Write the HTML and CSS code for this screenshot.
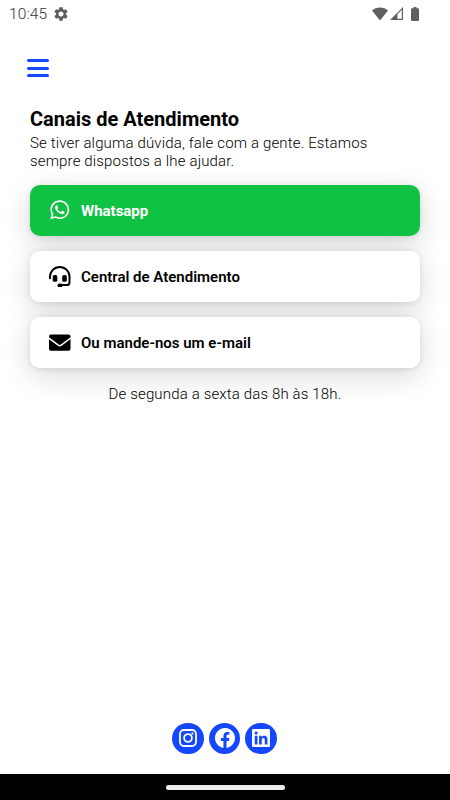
FILE: index.html
```html
<!DOCTYPE html>
<html lang="pt-BR">
<head>
  <meta charset="UTF-8">
  <meta name="viewport" content="width=device-width, initial-scale=1.0">
  <title>Canais de Atendimento</title>
  <link rel="stylesheet" href="styles.css">
</head>
<body>
  <div class="screen">
    <div class="status-bar">
      <span class="clock">10:45</span>
      <svg class="gear" viewBox="2 2 20 20"><path d="M19.14 12.94c.04-.3.06-.61.06-.94 0-.32-.02-.64-.07-.94l2.03-1.58c.18-.14.23-.41.12-.61l-1.92-3.32c-.12-.22-.37-.29-.59-.22l-2.39.96c-.5-.38-1.03-.7-1.62-.94l-.36-2.54c-.04-.24-.24-.41-.48-.41h-3.84c-.24 0-.43.17-.47.41l-.36 2.54c-.59.24-1.13.57-1.62.94l-2.39-.96c-.22-.08-.47 0-.59.22L2.74 8.87c-.12.21-.08.47.12.61l2.03 1.58c-.05.3-.09.63-.09.94s.02.64.07.94l-2.03 1.58c-.18.14-.23.41-.12.61l1.92 3.32c.12.22.37.29.59.22l2.39-.96c.5.38 1.03.7 1.62.94l.36 2.54c.05.24.24.41.48.41h3.84c.24 0 .44-.17.47-.41l.36-2.54c.59-.24 1.13-.56 1.62-.94l2.39.96c.22.08.47 0 .59-.22l1.92-3.32c.12-.22.07-.47-.12-.61l-2.01-1.58zM12 15.6c-1.98 0-3.6-1.62-3.6-3.6s1.62-3.6 3.6-3.6 3.6 1.62 3.6 3.6-1.62 3.6-3.6 3.6z"/></svg>
      <div class="signals">
        <svg class="wifi" viewBox="0 0 16 14"><path d="M8 13.6 0 3.5C2.2 1.6 5 .5 8 .5s5.800 1.100 8 3z"/></svg>
        <svg class="cell" viewBox="0 0 14 14"><path fill-rule="evenodd" d="M0 14 14 0v14zM8 7.700v5h4.700V3z"/></svg>
        <svg class="battery" viewBox="0 0 8 14"><path d="M2.500 0h3v1.200H7a1 1 0 0 1 1 1V13a1 1 0 0 1-1 1H1a1 1 0 0 1-1-1V2.200a1 1 0 0 1 1-1h1.500z"/></svg>
      </div>
    </div>

    <button class="menu" aria-label="Menu">
      <span></span>
      <span></span>
      <span></span>
    </button>

    <main class="content">
      <h1>Canais de Atendimento</h1>
      <p class="intro">Se tiver alguma dúvida, fale com a gente. Estamos sempre dispostos a lhe ajudar.</p>

      <div class="channels">
        <a class="channel whatsapp">
          <svg viewBox="0 0 448 512"><path d="M380.900 97.100C339 55.100 283.200 32 223.900 32c-122.400 0-222 99.600-222 222 0 39.100 10.200 77.300 29.600 111L0 480l117.700-30.900c32.400 17.700 68.900 27 106.100 27h.1c122.300 0 224.100-99.600 224.100-222 0-59.300-25.200-115-67.100-157zm-157 341.600c-33.200 0-65.700-8.900-94-25.700l-6.700-4-69.800 18.300L72 359.200l-4.400-7c-18.500-29.400-28.200-63.300-28.200-98.200 0-101.700 82.800-184.500 184.600-184.500 49.300 0 95.600 19.200 130.400 54.100 34.800 34.900 56.200 81.200 56.100 130.500 0 101.800-84.900 184.600-186.600 184.600zm101.200-138.200c-5.500-2.800-32.800-16.200-37.900-18-5.100-1.900-8.800-2.800-12.500 2.800-3.700 5.600-14.300 18-17.600 21.800-3.200 3.700-6.500 4.200-12 1.400-32.600-16.300-54-29.100-75.500-66-5.700-9.800 5.700-9.100 16.300-30.300 1.800-3.700.9-6.900-.5-9.700-1.400-2.800-12.500-30.100-17.100-41.200-4.500-10.800-9.100-9.300-12.500-9.500-3.200-.2-6.900-.2-10.600-.2-3.700 0-9.700 1.400-14.800 6.900-5.100 5.600-19.400 19-19.400 46.300 0 27.300 19.900 53.700 22.600 57.400 2.800 3.700 39.100 59.700 94.800 83.800 35.200 15.200 49 16.500 66.600 13.900 10.700-1.600 32.800-13.400 37.400-26.400 4.600-13 4.600-24.100 3.200-26.400-1.300-2.500-5-3.900-10.500-6.600z"/></svg>
          <span>Whatsapp</span>
        </a>
        <a class="channel">
          <svg viewBox="0 0 22 22"><path class="band" d="M1 12.500V11a10 10 0 0 1 20 0v5.500a3 3 0 0 1-3 3h-6"/><rect x="3.800" y="9.200" width="4.700" height="7" rx="1.700"/><rect x="13.500" y="9.200" width="4.700" height="7" rx="1.700"/><rect x="8.700" y="17.800" width="5.300" height="4" rx="2"/></svg>
          <span>Central de Atendimento</span>
        </a>
        <a class="channel">
          <svg viewBox="0 0 22 22"><rect y="2.500" width="22" height="16.600" rx="2"/><path class="flap" d="M-.5 6 9.500 13.400a2.500 2.500 0 0 0 3 0L22.500 6"/></svg>
          <span>Ou mande-nos um e-mail</span>
        </a>
      </div>

      <p class="hours">De segunda a sexta das 8h às 18h.</p>
    </main>

    <footer class="social">
      <a class="social-link" aria-label="Instagram">
        <svg viewBox="0 0 18 18"><rect class="line" x="1" y="1" width="16" height="16" rx="4"/><circle class="line" cx="9" cy="9" r="3.900"/><circle cx="13.400" cy="4.600" r="1.100"/></svg>
      </a>
      <a class="social-link" aria-label="Facebook">
        <svg class="facebook" viewBox="0 0 24 24"><path d="M24 12.073c0-6.627-5.373-12-12-12s-12 5.373-12 12c0 5.990 4.388 10.954 10.125 11.854v-8.385H7.078v-3.470h3.047V9.430c0-3.007 1.792-4.669 4.533-4.669 1.312 0 2.686.235 2.686.235v2.953H15.830c-1.491 0-1.956.925-1.956 1.874v2.250h3.328l-.532 3.470h-2.796v8.385C19.612 23.027 24 18.062 24 12.073z"/></svg>
      </a>
      <a class="social-link" aria-label="LinkedIn">
        <svg viewBox="0 32 448 448"><path d="M416 32H31.900C14.300 32 0 46.500 0 64.300v383.400C0 465.500 14.300 480 31.900 480H416c17.600 0 32-14.500 32-32.300V64.300c0-17.800-14.400-32.300-32-32.300zM135.400 416H69V202.200h66.500V416zm-33.200-243c-21.300 0-38.500-17.300-38.500-38.500S80.900 96 102.200 96c21.200 0 38.500 17.300 38.500 38.500 0 21.300-17.200 38.500-38.500 38.500zm282.100 243h-66.400V312c0-24.800-.5-56.700-34.500-56.700-34.600 0-39.900 27-39.900 54.900V416h-66.400V202.200h63.700v29.200h.9c8.900-16.800 30.600-34.500 62.900-34.500 67.200 0 79.700 44.300 79.700 101.900V416z"/></svg>
      </a>
    </footer>

    <div class="nav-bar"><span class="handle"></span></div>
  </div>
</body>
</html>
```
FILE: styles.css
```css
* {
  box-sizing: border-box;
}
body {
  margin: 0;
  font-family: Roboto, sans-serif;
  color: #000;
  background-color: #fff;
}
h1, p {
  margin: 0;
}
svg {
  display: block;
  fill: currentColor;
}
.screen {
  display: flex;
  flex-direction: column;
  height: 800px;
  overflow: hidden;
}

/* status bar */
.status-bar {
  display: flex;
  align-items: center;
  height: 27px;
  padding: 0 31px 0 9px;
  color: #5f5f5f;
}
.clock {
  font-size: 15.500px;
  font-weight: 300;
  color: #333;
  letter-spacing: 0.1px;
}
.gear {
  width: 14px;
  height: 14px;
  margin-left: 7px;
}
.signals {
  display: flex;
  margin-left: auto;
}
.wifi {
  width: 16px;
  height: 14px;
}
.cell {
  width: 13px;
  height: 13px;
  margin-left: 2px;
}
.battery {
  width: 8px;
  height: 14px;
  margin-left: 8px;
}

.menu {
  display: flex;
  flex-direction: column;
  gap: 4.500px;
  width: 21px;
  margin: 32px 0 0 27px;
  padding: 0;
  border: 0;
  background: none;
}
.menu span {
  width: 21.500px;
  height: 3px;
  border-radius: 1.500px;
  background-color: #1447ff;
}

.content {
  flex: 1;
  padding: 29px 30px 0;
}
h1 {
  margin-bottom: 2px;
  font-size: 20px;
  font-weight: 700;
  line-height: 27px;
}
.intro {
  padding-right: 20px;
  font-size: 15px;
  font-weight: 350;
  line-height: 17.5px;
  letter-spacing: 0.15px;
}

/* the shadows sit behind every card */
.channels {
  display: flex;
  flex-direction: column;
  gap: 15px;
  margin-top: 14.500px;
  position: relative;
  z-index: 0;
}
.channel {
  display: flex;
  align-items: center;
  gap: 10.500px;
  height: 51.3px;
  padding: 0 19px;
  border-radius: 10px;
  background-color: #fff;
  font-size: 15px;
  font-weight: 600;
  position: relative;
}
.channel::before {
  content: "";
  position: absolute;
  inset: 0;
  z-index: -1;
  border-radius: 10px;
  box-shadow: 0 8px 30px rgba(0,0,0,0.15), 0 1px 6px rgba(0,0,0,0.1);
}
.channel span {
  padding-top: 1px;
}
.channel svg {
  width: 21.500px;
  height: 21.500px;
}
.whatsapp {
  background-color: #10c243;
  color: #fff;
  font-weight: 700;
}
.band {
  fill: none;
  stroke: currentColor;
  stroke-width: 2;
  stroke-linecap: round;
}
.flap {
  fill: none;
  stroke: #fff;
  stroke-width: 1.5;
}
.hours {
  margin-top: 17px;
  font-size: 15px;
  font-weight: 350;
  line-height: 18px;
  letter-spacing: 0.15px;
  text-align: center;
}

.social {
  display: flex;
  justify-content: center;
  gap: 5px;
  padding: 0 1px 20px 0;
}
.social-link {
  display: flex;
  align-items: center;
  justify-content: center;
  width: 31.500px;
  height: 31.500px;
  border-radius: 50%;
  background-color: #1447ff;
  color: #fff;
}
.social-link svg {
  width: 18px;
  height: 18px;
}
.social-link .facebook {
  width: 20px;
  height: 20px;
}
.line {
  fill: none;
  stroke: currentColor;
  stroke-width: 1.8;
}

.nav-bar {
  display: flex;
  align-items: center;
  justify-content: center;
  height: 26px;
  background-color: #000;
}
.handle {
  width: 119px;
  height: 5px;
  border-radius: 3px;
  background-color: #ececec;
}
```
